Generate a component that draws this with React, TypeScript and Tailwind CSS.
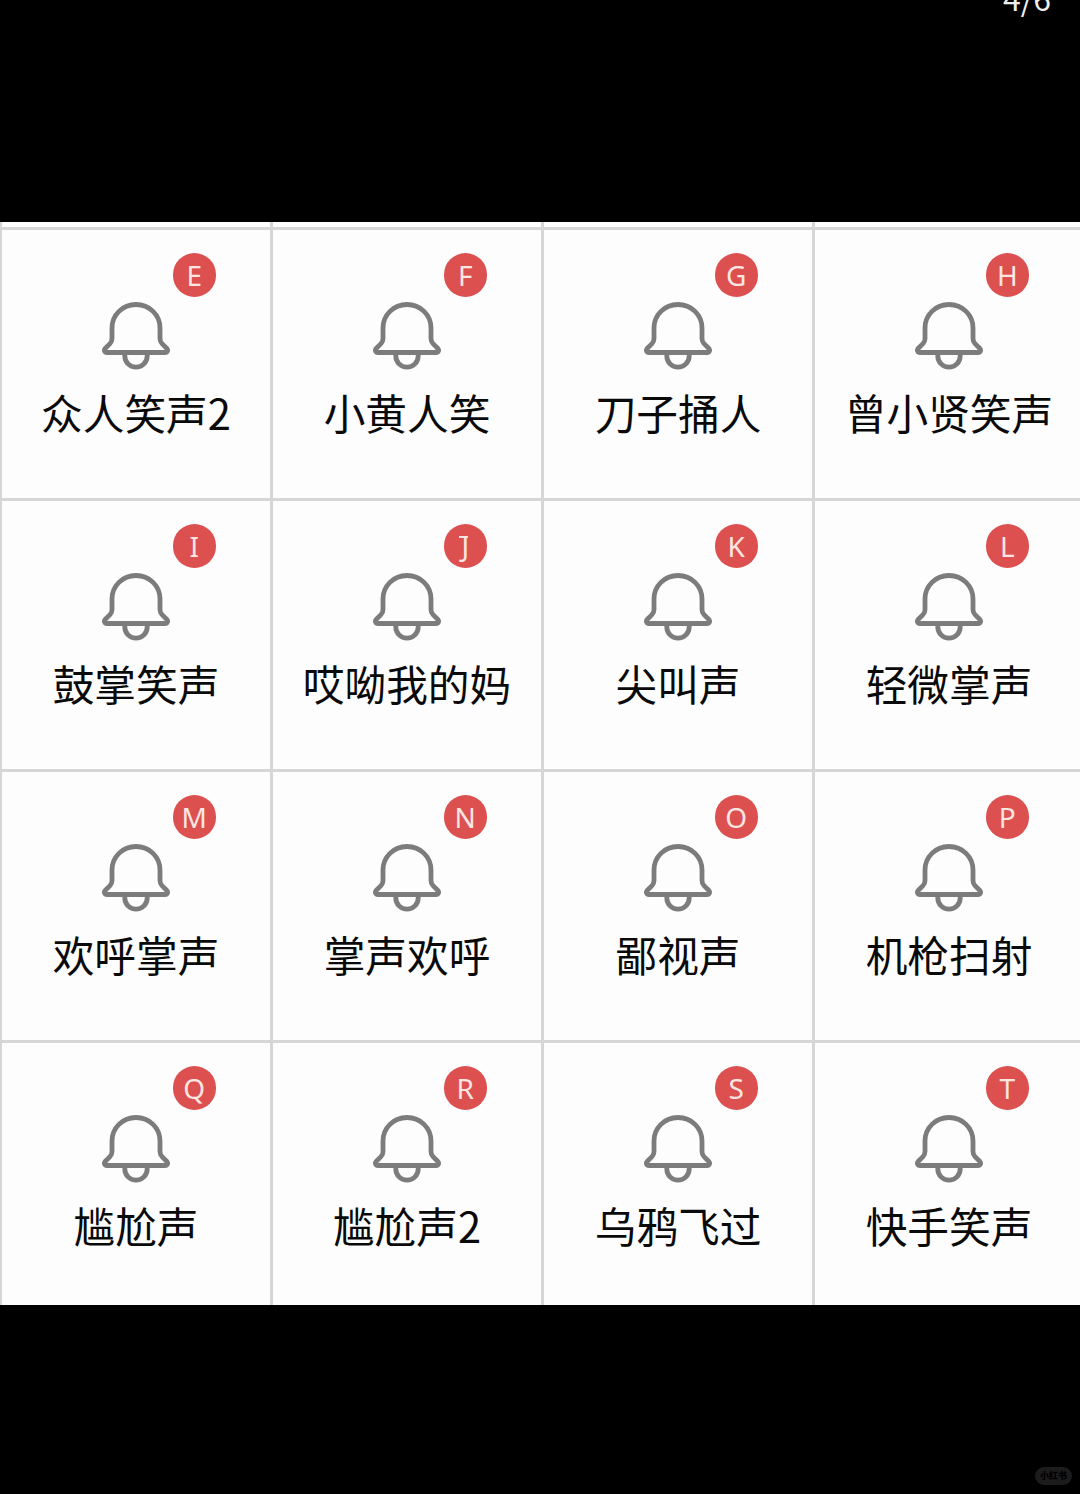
interface Sound {
  hotkey: string;
  name: string;
}

const sounds: Sound[] = [
  { hotkey: 'E', name: '众人笑声2' },
  { hotkey: 'F', name: '小黄人笑' },
  { hotkey: 'G', name: '刀子捅人' },
  { hotkey: 'H', name: '曾小贤笑声' },
  { hotkey: 'I', name: '鼓掌笑声' },
  { hotkey: 'J', name: '哎呦我的妈' },
  { hotkey: 'K', name: '尖叫声' },
  { hotkey: 'L', name: '轻微掌声' },
  { hotkey: 'M', name: '欢呼掌声' },
  { hotkey: 'N', name: '掌声欢呼' },
  { hotkey: 'O', name: '鄙视声' },
  { hotkey: 'P', name: '机枪扫射' },
  { hotkey: 'Q', name: '尴尬声' },
  { hotkey: 'R', name: '尴尬声2' },
  { hotkey: 'S', name: '乌鸦飞过' },
  { hotkey: 'T', name: '快手笑声' },
];

function BellIcon() {
  return (
    <svg
      width="68"
      height="70"
      viewBox="0 0 68 70"
      fill="none"
      stroke="#7c7c7c"
      strokeWidth="4.8"
      strokeLinejoin="round"
      strokeLinecap="butt"
    >
      <path d="M34 3.500C20.500 3.500 10 14 10 27V37.500C10 40 9.300 41.300 8 42.600L3.400 47.200C1.500 49.300 2.600 51.500 5 51.500H63C65.400 51.500 66.500 49.300 64.600 47.200L60 42.600C58.700 41.300 58 40 58 37.500V27C58 14 47.500 3.500 34 3.500Z" />
      <path d="M22.800 52V55A11.200 11.200 0 0 0 45.200 55V52" />
    </svg>
  );
}

function Badge({ hotkey }: { hotkey: string }) {
  return (
    <div className="absolute left-[170.500px] top-[23px] flex h-[43.500px] w-[43.500px] items-center justify-center rounded-full bg-[#dc5050] font-['Noto_Sans',sans-serif] text-[28px] leading-none text-[#fbe6e2]">
      <span className="relative">
        {hotkey}
        {/* top serif of the J */}
        {hotkey === 'J' && <span className="absolute top-[4px] -left-[2px] h-[2px] w-[9px] bg-[#fbe6e2]" />}
      </span>
    </div>
  );
}

function SoundCell({ sound }: { sound: Sound }) {
  return (
    <div className="relative flex flex-col items-center border-t-3 border-l-3 border-[#d6d6d6] pt-[71px]">
      <Badge hotkey={sound.hotkey} />
      <BellIcon />
      <p className="mt-[11px] text-[41.700px] leading-[60px] whitespace-nowrap text-[#0a0a0a]">{sound.name}</p>
    </div>
  );
}

export default function App() {
  return (
    <div className="flex h-[1494px] w-[1080px] flex-col overflow-hidden bg-black font-['Noto_Sans_CJK_SC',sans-serif]">
      <header className="flex h-[222px] shrink-0 items-start justify-end pr-[29px]">
        <span className="-mt-[23px] text-[32px] leading-[40px] text-[#eee]">4/6</span>
      </header>
      <main className="h-[1083px] shrink-0 overflow-hidden bg-[#fdfdfd]">
        <div className="-ml-px grid h-[5px] w-[1084px] grid-cols-4">
          {[0, 1, 2, 3].map((i) => (
            <div key={i} className="border-l-3 border-[#d6d6d6]" />
          ))}
        </div>
        <div className="-ml-px grid w-[1084px] auto-rows-[271px] grid-cols-4">
          {sounds.map((s) => (
            <SoundCell key={s.hotkey} sound={s} />
          ))}
        </div>
      </main>
      <footer className="flex flex-1 items-end justify-end pr-[8px] pb-[9px]">
        <span className="flex h-[18px] w-[37px] items-center justify-center rounded-full bg-[#1c1c1c] text-[9px] font-black text-black">
          小红书
        </span>
      </footer>
    </div>
  );
}
